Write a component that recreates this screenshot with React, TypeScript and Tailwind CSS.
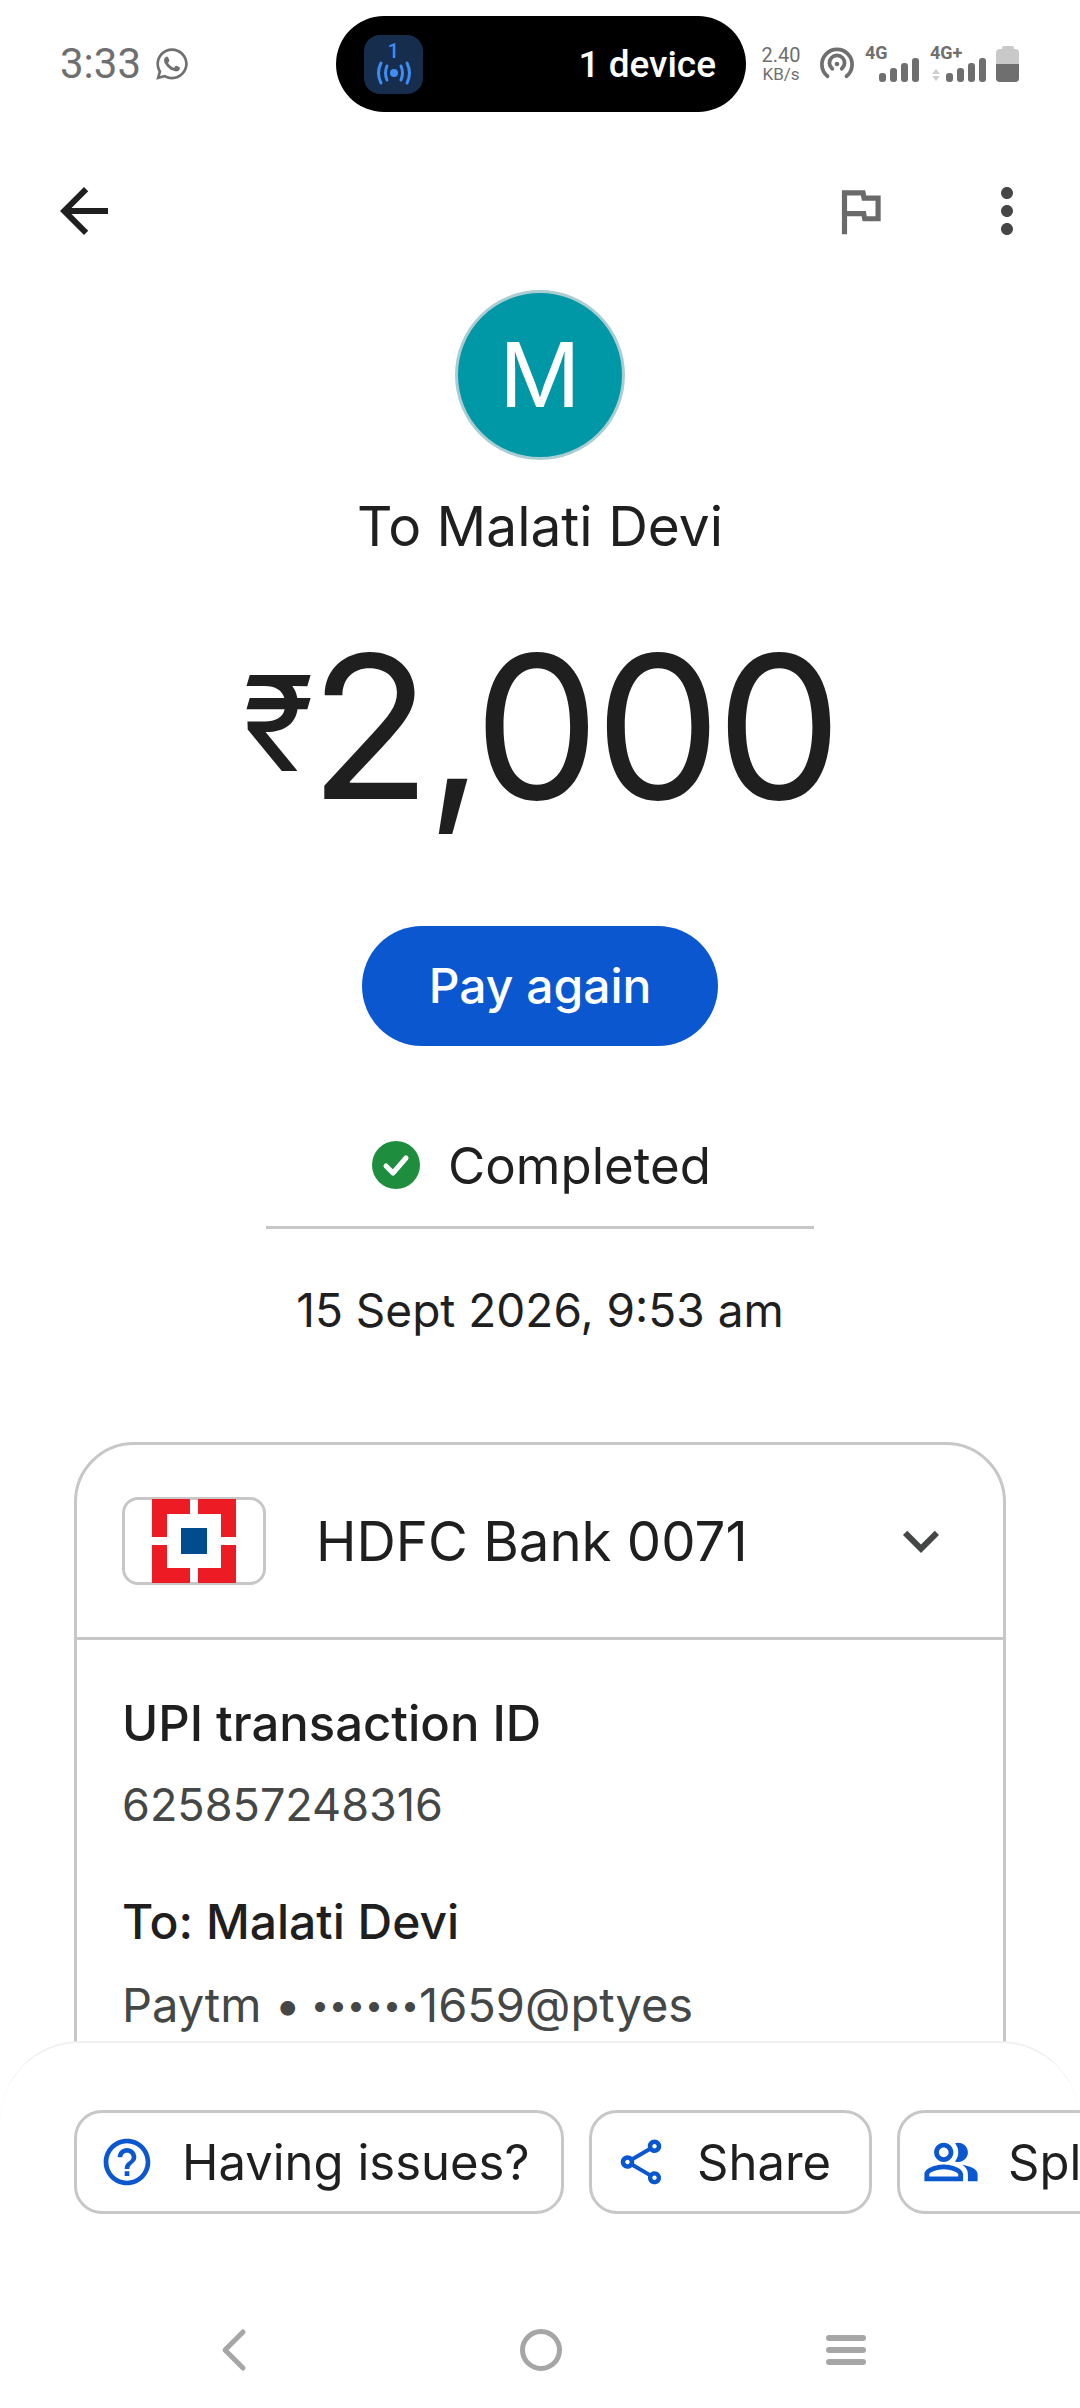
import { FaWhatsapp } from 'react-icons/fa';
import { MdArrowBack, MdKeyboardArrowDown, MdMoreVert, MdOutlineFlag, MdOutlineHelpOutline, MdOutlinePeopleAlt, MdOutlineShare } from 'react-icons/md';

function Signal() {
  const heights = [9, 14, 19, 24];
  return (
    <div className="flex items-end gap-[4px]">
      {heights.map((h, i) => (
        <div key={i} className="w-[7px] rounded-[3px] bg-[#6f6f6f]" style={{ height: h }} />
      ))}
    </div>
  );
}

function StatusBar() {
  return (
    <div className="flex h-[128px] items-center pl-[60px] font-['Roboto',sans-serif]">
      <span className="w-[94px] text-[42px] leading-none text-[#6f6f6f]">3:33</span>
      <FaWhatsapp className="text-[#6f6f6f]" size={36} />
      <div className="ml-[146px] flex h-[96px] w-[410px] items-center rounded-full bg-black pl-[28px] pr-[30px]">
        <div className="flex h-[59px] w-[59px] flex-col items-center justify-center rounded-[16px] bg-[#162d4d]">
          <span className="text-[20px] font-medium leading-[18px] text-[#3f8df0]">1</span>
          <svg width="42" height="26" viewBox="0 0 42 26" fill="none" stroke="#3f8df0" strokeWidth="3" strokeLinecap="round">
            <circle cx="21" cy="13" r="4" fill="#3f8df0" stroke="none" />
            <path d="M14 6 Q11 13 14 20" />
            <path d="M28 6 Q31 13 28 20" />
            <path d="M8 3 Q3 13 8 23" />
            <path d="M34 3 Q39 13 34 23" />
          </svg>
        </div>
        <span className="ml-auto text-[37px] font-medium leading-none text-white">1 device</span>
      </div>
      <div className="ml-[14px] flex w-[42px] flex-col items-center text-[#6f6f6f]">
        <span className="text-[20px] leading-[20px]">2.40</span>
        <span className="text-[17px] leading-[18px]">KB/s</span>
      </div>
      <svg className="ml-[17px]" width="36" height="34" viewBox="0 0 38 36" fill="none" stroke="#6f6f6f" strokeWidth="4" strokeLinecap="round">
        <path d="M9 31 A16 16 0 1 1 29 31" />
        <path d="M14 23 A8 8 0 1 1 24 23" />
        <circle cx="19" cy="18" r="2.5" fill="#6f6f6f" stroke="none" />
      </svg>
      <div className="relative ml-[10px] h-[36px] w-[54px]">
        <span className="absolute -top-[2px] left-0 text-[18px] font-bold leading-none text-[#6f6f6f]">4G</span>
        <div className="absolute bottom-0 right-0">
          <Signal />
        </div>
      </div>
      <div className="relative ml-[11px] h-[36px] w-[56px]">
        <span className="absolute -top-[2px] left-0 text-[18px] font-bold leading-none text-[#6f6f6f]">4G+</span>
        <div className="absolute bottom-0 right-0">
          <Signal />
        </div>
        <div className="absolute bottom-[1px] left-[2px] flex flex-col gap-[2px]">
          <div className="h-0 w-0 border-x-[4px] border-b-[5px] border-x-transparent border-b-[#cfcfcf]" />
          <div className="h-0 w-0 border-x-[4px] border-t-[5px] border-x-transparent border-t-[#cfcfcf]" />
        </div>
      </div>
      <div className="ml-[10px] flex flex-col items-center">
        <div className="h-[3px] w-[12px] rounded-t-[2px] bg-[#c9c9c9]" />
        <div className="flex h-[33px] w-[23px] flex-col overflow-hidden rounded-[4px] bg-[#c9c9c9]">
          <div className="mt-[15px] flex-1 bg-[#6f6f6f]" />
        </div>
      </div>
    </div>
  );
}

function Chip({ icon, label, className }: { icon: React.ReactNode; label: string; className: string }) {
  return (
    <div className={`flex h-[104px] shrink-0 items-center rounded-[28px] border-[3px] border-[#c7c7c7] ${className}`}>
      {icon}
      <span className="text-[49px] leading-none text-[#1f1f1f]">{label}</span>
    </div>
  );
}

export default function App() {
  return (
    <div className="relative h-[2408px] w-[1080px] overflow-hidden bg-white font-['Inter',sans-serif] text-[#1f1f1f]">
      <StatusBar />

      <div className="mt-[41px] flex h-[84px] items-center pl-[48px] pr-[37px]">
        <MdArrowBack size={72} className="text-[#1f1f1f]" />
        <MdOutlineFlag size={62} className="ml-auto text-[#6a6a6a]" />
        <MdMoreVert size={72} className="ml-[80px] text-[#444746]" />
      </div>

      <div className="mt-[37px] flex flex-col items-center">
        <div className="flex h-[170px] w-[170px] items-center justify-center rounded-full border-[3px] border-[#a9cdd1] bg-[#0097a7] text-[90px] leading-none text-white">
          M
        </div>
        <div className="mt-[33px] text-[55px] leading-[66px]">To Malati Devi</div>
        <div className="mt-[47px] flex h-[240px] items-start">
          <span className="-mr-[5px] mt-[37px] text-[132px] font-normal leading-[160px]">₹</span>
          <span className="text-[200px] leading-[240px] tracking-[-5px]">2,000</span>
        </div>
        <div className="mt-[80px] flex h-[120px] w-[356px] items-center justify-center rounded-full bg-[#0b57d0] text-[48px] font-medium text-white">
          Pay again
        </div>
        <div className="mt-[89px] ml-[3px] flex h-[60px] items-center">
          <svg width="48" height="48" viewBox="0 0 48 48">
            <circle cx="24" cy="24" r="24" fill="#1e8e3e" />
            <path d="M14 25 L21 32 L34 17" fill="none" stroke="#fff" strokeWidth="5" strokeLinecap="round" strokeLinejoin="round" />
          </svg>
          <span className="ml-[28px] text-[51px] leading-none">Completed</span>
        </div>
        <div className="mt-[31px] h-[3px] w-[548px] bg-[#c7c7c7]" />
        <div className="mt-[51px] text-[46px] leading-[60px]">15 Sept 2026, 9:53 am</div>
      </div>

      <div className="mx-[74px] mt-[102px] rounded-[60px] border-[3px] border-[#c7c7c7] pb-[160px]">
        <div className="flex h-[195px] items-center border-b-[3px] border-[#c7c7c7] pl-[45px] pr-[46px]">
          <div className="flex h-[88px] w-[144px] items-center justify-center rounded-[16px] border-[3px] border-[#c7c7c7]">
            <svg width="84" height="84" viewBox="0 0 84 84">
              <path d="M0 0H38V15H15V38H0Z M46 0H84V38H69V15H46Z M0 46H15V69H38V84H0Z M69 46H84V84H46V69H69Z" fill="#ed1c24" />
              <rect x="29" y="29" width="26" height="26" fill="#004c8f" />
            </svg>
          </div>
          <span className="ml-[50px] text-[54.5px] leading-none">HDFC Bank 0071</span>
          <MdKeyboardArrowDown size={72} className="ml-auto text-[#444746]" />
        </div>
        <div className="px-[45px] pt-[54px]">
          <div className="text-[49px] font-medium leading-[60px]">UPI transaction ID</div>
          <div className="mt-[21px] text-[45px] leading-[60px] text-[#444746]">625857248316</div>
          <div className="mt-[57px] text-[48px] font-medium leading-[60px]">To: Malati Devi</div>
          <div className="mt-[23px] flex items-center text-[47px] leading-[60px] text-[#444746]">
            <span>Paytm •</span>
            <span className="ml-[10px] text-[32px]">••••••</span>
            <span>1659@ptyes</span>
          </div>
        </div>
      </div>

      <div className="absolute bottom-0 left-0 right-0 h-[367px] rounded-t-[80px] border-t-[2px] border-[#f0f0f0] bg-white">
        <div className="ml-[74px] mt-[67px] flex gap-[25px]">
          <Chip className="w-[490px] pl-[22px]" icon={<MdOutlineHelpOutline size={56} className="mr-[27px] text-[#0b57d0]" />} label="Having issues?" />
          <Chip className="w-[283px] pl-[22px]" icon={<MdOutlineShare size={54} className="mr-[29px] text-[#0b57d0]" />} label="Share" />
          <Chip className="w-[300px] pl-[22px]" icon={<MdOutlinePeopleAlt size={58} className="mr-[28px] text-[#0b57d0]" />} label="Split" />
        </div>
        <div className="mt-[114px] flex items-center">
          <svg className="ml-[218px]" width="32" height="44" viewBox="0 0 32 44" fill="none" stroke="#a6a6a6" strokeWidth="5" strokeLinecap="round" strokeLinejoin="round">
            <path d="M25 4 L7 22 L25 40" />
          </svg>
          <div className="ml-[270px] h-[42px] w-[42px] rounded-full border-[5px] border-[#a6a6a6]" />
          <div className="ml-[264px] flex w-[40px] flex-col gap-[6px]">
            <div className="h-[6px] rounded-full bg-[#a6a6a6]" />
            <div className="h-[6px] rounded-full bg-[#a6a6a6]" />
            <div className="h-[6px] rounded-full bg-[#a6a6a6]" />
          </div>
        </div>
      </div>
    </div>
  );
}
